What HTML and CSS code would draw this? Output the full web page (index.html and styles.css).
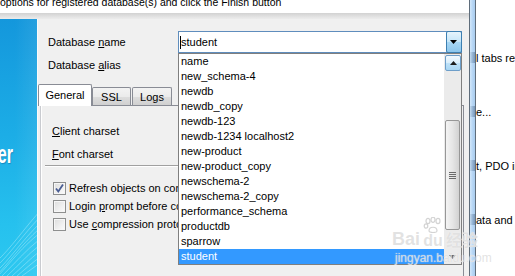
FILE: index.html
```html
<!DOCTYPE html>
<html lang="en">
<head>
    <meta charset="UTF-8">
    <meta name="viewport" content="width=device-width, initial-scale=1.0">
    <title>Register Database - Connection properties</title>
    <link rel="stylesheet" href="styles.css">
</head>
<body>

<div class="screen">
    <div class="wizard">
        <div class="hint"><p>options for registered database(s) and click the Finish button</p></div>
        <div class="band"></div>

        <div class="main">
            <div class="brand">
                <div class="brand-title">Manager</div>
                <svg class="waves" width="37" height="92" viewBox="0 0 37 92">
                    <path d="M-4 92 C8 80 20 62 40 44"/>
                    <path d="M-4 88 C9 76 21 58 40 39"/>
                    <path d="M-2 92 C11 78 23 62 40 49"/>
                    <path d="M2 92 C14 80 26 66 40 55"/>
                    <path d="M7 92 C18 82 28 70 40 61"/>
                    <path d="M12 92 C21 84 30 75 40 67"/>
                    <path d="M17 92 C24 86 32 79 40 73"/>
                    <path d="M22 92 C28 88 34 83 40 79"/>
                    <path d="M-4 83 C10 70 22 52 40 33"/>
                    <path d="M-4 78 C11 64 23 46 40 27"/>
                </svg>
            </div>

            <div class="dialog">
                <div class="fields">
                    <div class="field">
                        <label>Database <u>n</u>ame</label>
                        <div class="combo">
                            <span class="caret"></span>
                            <span class="combo-text">student</span>
                            <span class="combo-btn">
                                <svg width="8" height="5" viewBox="0 0 8 5"><path d="M0 0H7L3.5 4Z" fill="#000"/></svg>
                            </span>

                            <!-- open drop-down list of the combo -->
                            <div class="dropdown">
                                <ul id="dbList" class="options"></ul>
                                <div class="scrollbar">
                                    <div class="sb-up">
                                        <svg width="7" height="4" viewBox="0 0 7 4"><path d="M0 4H7L3.5 0Z" fill="#1c1c1c"/></svg>
                                    </div>
                                    <div class="sb-thumb"><span class="grip"></span></div>
                                    <div class="sb-down">
                                        <svg width="7" height="4" viewBox="0 0 7 4"><path d="M0 0H7L3.5 4Z" fill="#5a5a5a"/></svg>
                                    </div>
                                </div>
                            </div>
                        </div>
                    </div>
                    <div class="field field-alias">
                        <label>Database <u>a</u>lias</label>
                    </div>
                </div>

                <div class="tabs">
                    <div class="tab-strip">
                        <span class="tab active">General</span>
                        <span class="tab tab-ssl">SSL</span>
                        <span class="tab tab-logs">Logs</span>
                    </div>
                    <div class="sheet">
                        <div class="sheet-row row-client"><u>C</u>lient charset</div>
                        <div class="sheet-row"><u>F</u>ont charset</div>
                        <div class="separator"></div>
                        <div class="check-row first">
                            <span class="check">
                                <svg width="11" height="11" viewBox="0 0 11 11"><path d="M2 5.5L4.3 8.5L9 1.5" fill="none" stroke="#4a5d93" stroke-width="1.8"/></svg>
                            </span>
                            <span>Refresh objects on connection</span>
                        </div>
                        <div class="check-row">
                            <span class="check"></span>
                            <span>Login <u>p</u>rompt before connecting</span>
                        </div>
                        <div class="check-row">
                            <span class="check"></span>
                            <span>Use <u>c</u>ompression protocol</span>
                        </div>
                    </div>
                </div>
            </div>
        </div>
    </div>

    <div class="splitter">
        <span class="mark"></span>
        <span class="mark"></span>
        <span class="mark"></span>
        <span class="mark"></span>
    </div>

    <div class="notes">
        <p>l tabs refresh</p>
        <p>e...</p>
        <p>t, PDO interface</p>
        <p>ata and run</p>
    </div>
</div>

<div class="watermark">
    <div class="wm-logo">
        <span>Bai</span>
        <span class="wm-paw">
            <svg width="20" height="16" viewBox="0 0 20 16">
                <ellipse cx="5" cy="4" rx="2" ry="2.6"/>
                <ellipse cx="10" cy="2.8" rx="2" ry="2.6"/>
                <ellipse cx="15" cy="4" rx="2" ry="2.6"/>
                <ellipse cx="3" cy="9" rx="1.8" ry="2.2"/>
                <path d="M6 14 C6 9 14 9 14 14 C14 16 6 16 6 14Z"/>
            </svg>
            <span>du</span>
        </span>
        <span class="wm-cjk">经验</span>
    </div>
    <div class="wm-url">jingyan.baidu.com</div>
</div>

<script>
// databases found on the host
const databases = [
    'name', 'new_schema-4', 'newdb', 'newdb_copy', 'newdb-123',
    'newdb-1234 localhost2', 'new-product', 'new-product_copy',
    'newschema-2', 'newschema-2_copy', 'performance_schema',
    'productdb', 'sparrow', 'student'
];
const selected = 'student';

const list = document.getElementById('dbList');
databases.forEach(db => {
    const item = document.createElement('li');
    item.textContent = db;
    if (db === selected) item.className = 'selected';
    list.appendChild(item);
});
</script>

</body>
</html>
```

FILE: styles.css
```css
body {
    margin: 0;
    width: 515px;
    height: 276px;
    overflow: hidden;
    font-family: "Liberation Sans", Arial, sans-serif;
    font-size: 11px;
    color: #000;
    background: #fff;
    position: relative;
}
p {
    margin: 0;
}
u {
    text-decoration-thickness: 1px;
    text-underline-offset: 1px;
}
.screen {
    display: flex;
    height: 276px;
}
.wizard {
    width: 469px;
    display: flex;
    flex-direction: column;
}
.hint {
    height: 13px;
    overflow: hidden;
    background: #fff;
    white-space: nowrap;
}
.hint p {
    margin-top: -4px;
    line-height: 13px;
    font-size: 10.5px;
}
.band {
    height: 6px;
    background: linear-gradient(#d2d2d2, #e2e2e2 60%, #ececec);
}
.main {
    flex: 1;
    display: flex;
    min-height: 0;
}

/* blue banner on the left */
.brand {
    width: 37px;
    border-right: 1px solid #fafafa;
    background: linear-gradient(90deg, rgba(255,255,255,0) 40%, rgba(255,255,255,0.08)),
                linear-gradient(#1497dc, #1cade6 45%, #26c1ee 80%, #2cc8f0);
    display: flex;
    flex-direction: column;
    overflow: hidden;
}
.brand-title {
    margin-top: 123px;
    height: 24px;
    line-height: 24px;
    font-size: 26px;
    font-weight: bold;
    color: #fff;
    text-align: right;
    white-space: nowrap;
    width: 13px;
    direction: rtl;
    transform: scaleX(0.62);
    transform-origin: right center;
    text-shadow: 1px 1px 1px rgba(0, 60, 120, 0.35);
}
.waves {
    margin-top: auto;
    display: block;
}
.waves path {
    fill: none;
    stroke: #e6fbff;
    stroke-width: 0.6;
    opacity: 0.55;
}

/* dialog body */
.dialog {
    flex: 1;
    background: #f0f0f0;
    display: flex;
    flex-direction: column;
}
.fields {
    padding: 12px 0 0 10px;
}
.field {
    display: flex;
    align-items: center;
    height: 22px;
}
.field-alias {
    margin-top: 1px;
}
.field label {
    width: 130px;
}
.combo {
    position: relative;
    width: 284px;
    height: 22px;
    box-sizing: border-box;
    border: 1px solid #5f8dbd;
    background: #fff;
    display: flex;
    align-items: center;
    padding-left: 1px;
}
.caret {
    width: 1px;
    height: 13px;
    background: #000;
}
.combo-btn {
    margin: -1px -1px -1px auto;
    align-self: stretch;
    width: 16px;
    box-sizing: border-box;
    border: 1px solid #3c7fb1;
    border-radius: 2px;
    background: linear-gradient(#e6f4fc, #c4e5f8 50%, #a8d7f4 50%, #8cc6ec);
    display: flex;
    align-items: center;
    justify-content: center;
}
.dropdown {
    position: absolute;
    top: 21px;
    left: -1px;
    width: 284px;
    height: 212px;
    box-sizing: border-box;
    border: 1px solid #7f7f7f;
    background: #fff;
    display: flex;
    z-index: 5;
}
.options {
    flex: 1;
    list-style: none;
    margin: 0;
    padding: 0;
}
.options li {
    height: 15px;
    line-height: 15px;
    padding-left: 2px;
    white-space: nowrap;
}
.options li.selected {
    background: #3399ff;
    color: #fff;
}
.scrollbar {
    width: 17px;
    background: #ebebeb;
    display: flex;
    flex-direction: column;
}
.sb-up {
    margin: 1px 0 0 1px;
    width: 16px;
    height: 16px;
    box-sizing: border-box;
    border: 1px solid #6d9ec9;
    border-radius: 2px;
    background: linear-gradient(#f2f9fe, #d9eefb 50%, #bfe2f8 50%, #a9d6f3);
    display: flex;
    align-items: center;
    justify-content: center;
}
.sb-thumb {
    margin: 49px 0 0 1px;
    width: 15px;
    height: 110px;
    box-sizing: border-box;
    border: 1px solid #979797;
    border-radius: 2px;
    background: linear-gradient(90deg, #f4f4f4, #e6e6e6 50%, #d2d2d2);
    display: flex;
    align-items: center;
    justify-content: center;
}
.grip {
    width: 7px;
    height: 7px;
    background: repeating-linear-gradient(#6a6a6a 0 1px, transparent 1px 2px);
}
.sb-down {
    margin-top: 19px;
    height: 15px;
    display: flex;
    align-items: center;
    justify-content: center;
}

/* tab control */
.tabs {
    flex: 1;
    margin: 8px 5px 0 2px;
    display: flex;
    flex-direction: column;
}
.tab-strip {
    height: 21px;
    display: flex;
    align-items: flex-end;
}
.tab {
    box-sizing: border-box;
    height: 18px;
    padding-top: 2px;
    line-height: 15px;
    text-align: center;
    border: 1px solid #898c95;
    border-bottom: none;
    border-radius: 2px 2px 0 0;
    background: linear-gradient(#f3f3f3, #ebebeb 50%, #dedede 50%, #d0d0d0);
}
.tab.active {
    width: 54px;
    height: 22px;
    padding-top: 3px;
    margin: 0 0 -1px -2px;
    background: #fff;
    z-index: 1;
}
.tab-ssl {
    width: 39px;
}
.tab-logs {
    width: 40px;
    margin-left: 1px;
}
.sheet {
    flex: 1;
    border: 1px solid #898c95;
    border-left-color: #c9cbd0;
    border-bottom: none;
    box-shadow: inset 1px 0 #fff;
    background: #f0f0f0;
}
.sheet-row {
    height: 22px;
    line-height: 22px;
    padding-left: 11px;
    margin-top: 1px;
}
.row-client {
    margin-top: 14px;
}
.separator {
    margin: 0 4px;
    height: 0;
    border-top: 1px solid #a0a0a0;
    border-bottom: 1px solid #fff;
}
.check-row {
    height: 18px;
    display: flex;
    align-items: center;
    padding-left: 12px;
    white-space: nowrap;
}
.check-row.first {
    margin-top: 12px;
}
.check {
    width: 13px;
    height: 13px;
    box-sizing: border-box;
    border: 1px solid #8e8f8f;
    background: linear-gradient(135deg, #dcdcdc, #f0f0f0 60%, #fbfbfb);
    box-shadow: inset 0 0 0 1px #f6f6f6;
    margin-right: 3px;
    display: flex;
    align-items: center;
    justify-content: center;
}

/* splitter and the help pane on the right */
.splitter {
    width: 5px;
    border-left: 1px solid #5f6d7b;
    border-right: 1px solid #5f6d7b;
    background: linear-gradient(90deg, #d3e8fb, #b8d7f5 50%, #a9ccee);
    display: flex;
    flex-direction: column;
    gap: 43px;
    padding-top: 52px;
}
.mark {
    height: 11px;
    background: linear-gradient(90deg, rgba(90,120,150,0.1), rgba(70,100,135,0.5));
}
.notes {
    flex: 1;
    overflow: hidden;
    white-space: nowrap;
    padding-top: 52px;
    display: flex;
    flex-direction: column;
    gap: 41px;
}
.notes p {
    line-height: 13px;
}

/* site watermark over the picture */
.watermark {
    position: absolute;
    left: 392px;
    top: 216px;
    z-index: 10;
    color: rgba(214, 214, 214, 0.7);
    text-shadow: 0 0 1px rgba(255, 255, 255, 0.9);
    pointer-events: none;
}
.wm-logo {
    display: flex;
    align-items: flex-end;
    font-size: 18px;
    font-weight: bold;
    line-height: 18px;
    height: 32px;
}
.wm-paw {
    display: flex;
    flex-direction: column;
    align-items: center;
    margin-left: 3px;
}
.wm-paw svg {
    fill: none;
    stroke: rgba(200, 200, 200, 0.8);
    stroke-width: 1.2;
}
.wm-paw span {
    font-size: 16px;
    line-height: 15px;
}
.wm-cjk {
    font-family: "Noto Sans CJK SC", sans-serif;
    font-size: 16px;
    margin-left: 3px;
}
.wm-url {
    margin: 4px 0 0 3px;
    font-size: 12px;
    line-height: 12px;
}
```
